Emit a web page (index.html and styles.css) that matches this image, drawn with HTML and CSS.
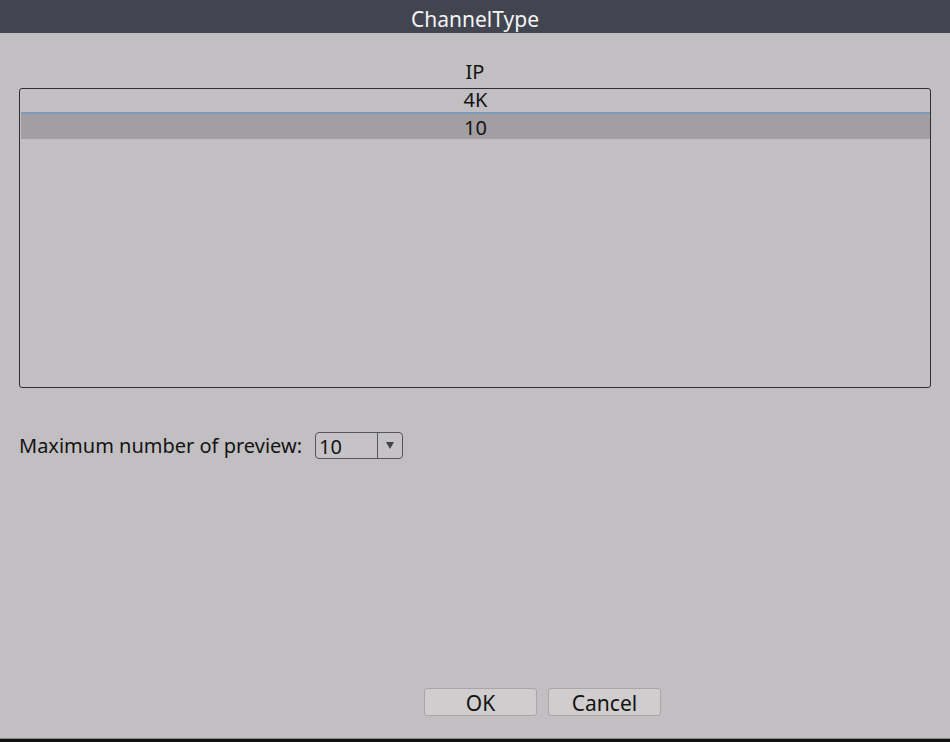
FILE: index.html
```html
<!DOCTYPE html>
<html lang="en">
<head>
    <meta charset="UTF-8">
    <meta name="viewport" content="width=device-width, initial-scale=1.0">
    <title>ChannelType</title>
    <link rel="stylesheet" href="styles.css">
</head>
<body>

<div class="dialog">
    <div class="titlebar">ChannelType</div>

    <div class="dialog-body">
        <div class="list-head">IP</div>
        <div class="channel-list">
            <div class="row">4K</div>
            <div class="row selected">10</div>
        </div>

        <div class="preview-row">
            <span class="preview-label">Maximum number of preview:</span>
            <div class="combo">
                <span class="combo-value">10</span>
                <span class="combo-arrow"></span>
            </div>
        </div>

        <div class="buttons">
            <button class="btn">OK</button>
            <button class="btn">Cancel</button>
        </div>
    </div>

    <div class="bottom-edge"></div>
</div>

</body>
</html>
```

FILE: styles.css
```css
html, body {
    margin: 0;
    padding: 0;
}
body {
    width: 950px;
    height: 742px;
    overflow: hidden;
    background: #c2bfc2;
    font-family: "Noto Sans", "Open Sans", sans-serif;
    color: #141414;
}
.dialog {
    display: flex;
    flex-direction: column;
    height: 742px;
}
.titlebar {
    height: 33px;
    line-height: 38px;
    background: #42454f;
    color: #f4f4f6;
    text-align: center;
    font-size: 21px;
}
.dialog-body {
    flex: 1;
    display: flex;
    flex-direction: column;
    padding: 0 19px;
}
.list-head {
    height: 55px;
    line-height: 78px;
    text-align: center;
    font-size: 20px;
}
.channel-list {
    height: 298px;
    border: 1px solid #2e2e33;
    border-radius: 3px;
    padding-left: 1px;
}
.row {
    text-align: center;
    font-size: 20px;
}
.row:first-child {
    height: 23px;
    line-height: 22px;
    border-bottom: 2px solid #7d98b8;
}
.row.selected {
    height: 24px;
    padding-top: 1px;
    line-height: 25px;
    background: #a39ea2;
}
.preview-row {
    display: flex;
    align-items: center;
    gap: 13px;
    margin-top: 44px;
    height: 27px;
}
.preview-label {
    font-size: 20px;
}
.combo {
    width: 86px;
    height: 25px;
    border: 1px solid #55555a;
    border-radius: 4px;
    display: flex;
    align-items: stretch;
    background: #c6c3c6;
}
.combo-value {
    width: 58px;
    padding-left: 3px;
    line-height: 28px;
    font-size: 20px;
    border-right: 1px solid #55555a;
}
.combo-arrow {
    flex: 1;
    display: flex;
    align-items: center;
    justify-content: center;
}
.combo-arrow::after {
    content: "";
    border-left: 4px solid transparent;
    border-right: 4px solid transparent;
    border-top: 7px solid #444448;
}
.buttons {
    margin-top: auto;
    margin-bottom: 22px;
    display: flex;
    gap: 11px;
    padding-left: 405px;
}
.btn {
    width: 113px;
    height: 28px;
    padding: 0;
    background: #d0cdcf;
    border: 1px solid #a8a6a8;
    border-radius: 3px;
    font-family: "Noto Sans", "Open Sans", sans-serif;
    font-size: 21px;
    line-height: 28px;
    color: #141414;
}
.bottom-edge {
    height: 3px;
    border-top: 1px solid #8d8b8d;
    background: #111;
}
```
